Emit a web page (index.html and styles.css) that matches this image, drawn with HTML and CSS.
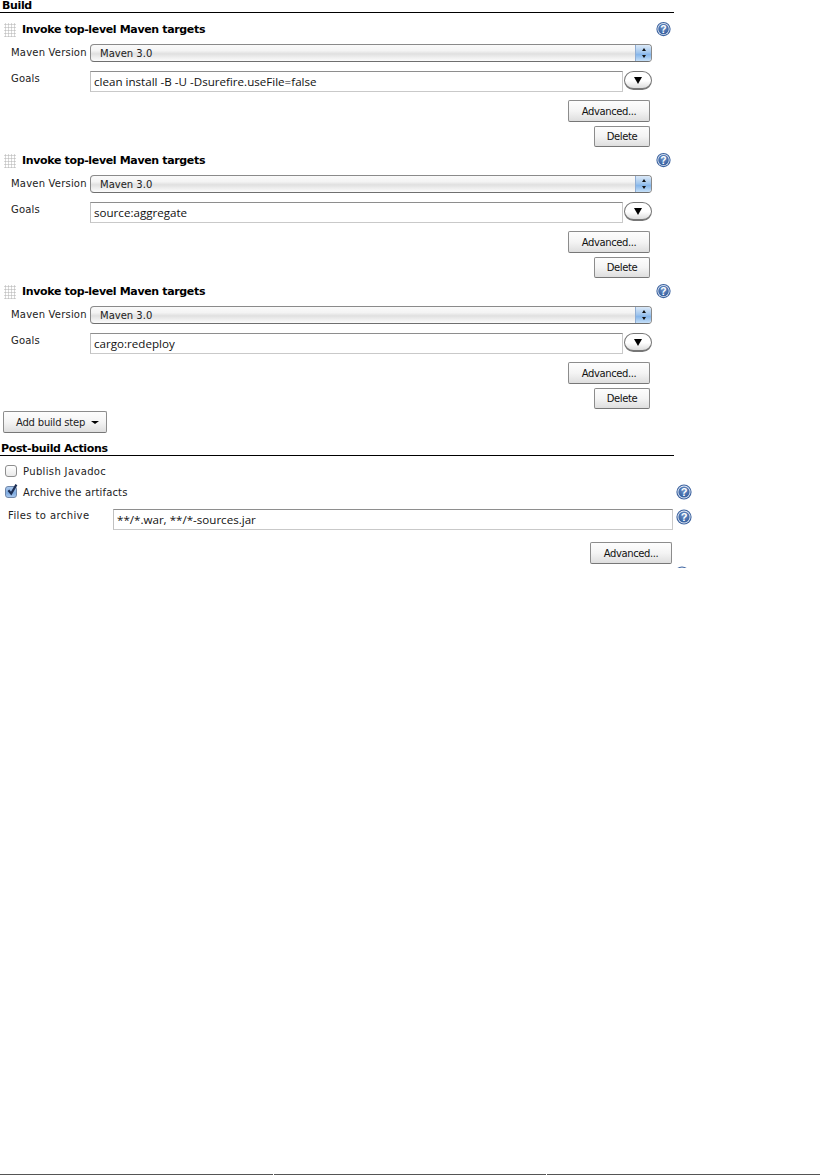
FILE: index.html
```html
<!DOCTYPE html>
<html lang="en">
<head>
<meta charset="utf-8">
<title>Build</title>
<link rel="stylesheet" href="styles.css">
</head>
<body>
<svg class="defs" width="0" height="0" aria-hidden="true">
  <defs>
    <radialGradient id="helpfill" cx="50%" cy="35%" r="70%">
      <stop offset="0" stop-color="#6f93c8"/>
      <stop offset="1" stop-color="#2f5a9c"/>
    </radialGradient>
    <symbol id="help" viewBox="0 0 16 16">
      <circle cx="8" cy="8" r="7.6" fill="#3b629f"/>
      <circle cx="8" cy="8" r="6.5" fill="#e8eef7"/>
      <circle cx="8" cy="8" r="5.6" fill="url(#helpfill)"/>
      <text x="8" y="12" text-anchor="middle" class="help-mark">?</text>
    </symbol>
  </defs>
</svg>
<main class="form">
  <h2 class="section section-build">Build</h2>

  <section class="step">
    <div class="step-head">
      <span class="grip"></span>
      <span class="step-title">Invoke top-level Maven targets</span>
      <svg class="help"><use href="#help"/></svg>
    </div>
    <div class="row row-select">
      <span class="label">Maven Version</span>
      <div class="select"><span class="select-text">Maven 3.0</span><span class="stepper"><i class="up"></i><i class="down"></i></span></div>
    </div>
    <div class="row row-goals">
      <span class="label label-goals">Goals</span>
      <div class="input">clean install -B -U -Dsurefire.useFile=false</div>
      <button class="round" type="button"><i class="tri"></i></button>
    </div>
    <div class="actions">
      <button class="btn adv" type="button">Advanced...</button>
      <button class="btn del" type="button">Delete</button>
    </div>
  </section>

  <section class="step">
    <div class="step-head">
      <span class="grip"></span>
      <span class="step-title">Invoke top-level Maven targets</span>
      <svg class="help"><use href="#help"/></svg>
    </div>
    <div class="row row-select">
      <span class="label">Maven Version</span>
      <div class="select"><span class="select-text">Maven 3.0</span><span class="stepper"><i class="up"></i><i class="down"></i></span></div>
    </div>
    <div class="row row-goals">
      <span class="label label-goals">Goals</span>
      <div class="input">source:aggregate</div>
      <button class="round" type="button"><i class="tri"></i></button>
    </div>
    <div class="actions">
      <button class="btn adv" type="button">Advanced...</button>
      <button class="btn del" type="button">Delete</button>
    </div>
  </section>

  <section class="step">
    <div class="step-head">
      <span class="grip"></span>
      <span class="step-title">Invoke top-level Maven targets</span>
      <svg class="help"><use href="#help"/></svg>
    </div>
    <div class="row row-select">
      <span class="label">Maven Version</span>
      <div class="select"><span class="select-text">Maven 3.0</span><span class="stepper"><i class="up"></i><i class="down"></i></span></div>
    </div>
    <div class="row row-goals">
      <span class="label label-goals">Goals</span>
      <div class="input">cargo:redeploy</div>
      <button class="round" type="button"><i class="tri"></i></button>
    </div>
    <div class="actions">
      <button class="btn adv" type="button">Advanced...</button>
      <button class="btn del" type="button">Delete</button>
    </div>
  </section>

  <button class="btn add" type="button">Add build step<i class="caret"></i></button>

  <h2 class="section section-post">Post-build Actions</h2>

  <div class="check-row check-first">
    <span class="check"></span>
    <span class="check-label label-publish">Publish Javadoc</span>
  </div>
  <div class="check-row check-second">
    <span class="check checked">
      <svg viewBox="0 0 14 15" width="14" height="15"><path d="M3.4 7.2 L6.2 10.6 L11.4 1.6" fill="none" stroke="#1d2f55" stroke-width="2.2"/></svg>
    </span>
    <span class="check-label">Archive the artifacts</span>
    <svg class="help help-post"><use href="#help"/></svg>
  </div>
  <div class="row row-files">
    <span class="label label-files">Files to archive</span>
    <div class="input input-files">**/*.war, **/*-sources.jar</div>
    <svg class="help help-files"><use href="#help"/></svg>
  </div>
  <div class="post-actions">
    <button class="btn adv" type="button">Advanced...</button>
  </div>
  <div class="cut-row"><svg class="help help-post"><use href="#help"/></svg></div>
</main>
<footer class="rule">
  <span></span><span></span><span></span>
</footer>
</body>
</html>
```
FILE: styles.css
```css
* { box-sizing: border-box; }
html, body { margin: 0; padding: 0; background: #fff; }
body {
  width: 820px;
  height: 1175px;
  overflow: hidden;
  display: flex;
  flex-direction: column;
  justify-content: space-between;
  font-family: "Open Sans", "DejaVu Sans", sans-serif;
  font-size: 11px;
  color: #111;
}
.defs { position: absolute; }
.help-mark { font: bold 11px "Liberation Sans", sans-serif; fill: #fff; }

.form { height: 568px; overflow: hidden; flex: none; }

.section {
  margin: 0;
  width: 674px;
  height: 13px;
  font: bold 11px/10px "DejaVu Sans", sans-serif;
  letter-spacing: -0.35px;
  border-bottom: 1px solid #000;
  color: #000;
  padding-left: 2px;
}
.section-build { line-height: 12px; }

.step { height: 131px; width: 674px; padding-top: 8px; }
.step-head { display: flex; align-items: center; height: 17px; padding-left: 4px; width: 671px; }
.grip {
  width: 12px;
  height: 14px;
  background-image: radial-gradient(circle, #c4c4c4 0.9px, transparent 1.2px);
  background-size: 3px 3px;
}
.step-title {
  margin-left: 6px;
  font: bold 11px "DejaVu Sans", sans-serif;
  letter-spacing: -0.35px;
  color: #000;
}
.help { width: 16px; height: 16px; flex: none; }
.step-head .help { margin-left: auto; align-self: flex-start; width: 15px; }

.row { display: flex; }
.row-select { margin-top: 6px; height: 17px; align-items: center; }
.label {
  width: 90px;
  padding-left: 11px;
  flex: none;
  font: 10px "DejaVu Sans", sans-serif;
  letter-spacing: 0.2px;
  color: #222;
  white-space: nowrap;
}
.select {
  width: 562px;
  height: 18px;
  display: flex;
  justify-content: space-between;
  align-items: center;
  border: 1px solid #8a8a8a;
  border-bottom-color: #6f6f6f;
  border-radius: 4px;
  background: linear-gradient(#fafafa 0%, #f4f4f4 35%, #e0e0e0 55%, #f0f0f0 80%, #fcfcfc 100%);
  overflow: hidden;
}
.select-text {
  padding: 1px 0 0 9px;
  font: 10px "DejaVu Sans", sans-serif;
  color: #222;
}
.stepper {
  width: 16px;
  height: 100%;
  display: flex;
  flex-direction: column;
  align-items: center;
  justify-content: center;
  gap: 4px;
  border-left: 1px solid #8fadd3;
  background: linear-gradient(#dbe9f8 0%, #a4c8ee 45%, #86b6ea 60%, #c6e0f8 100%);
}
.up, .down { width: 0; height: 0; border-left: 2.5px solid transparent; border-right: 2.5px solid transparent; }
.up { border-bottom: 3px solid #111; }
.down { border-top: 3px solid #111; }

.row-goals { margin-top: 10px; height: 21px; }
.label-goals { padding-top: 2px; }
.input {
  width: 533px;
  height: 21px;
  padding: 3px 0 0 3px;
  border: 1px solid #c9c9c9;
  border-top-color: #8e8e8e;
  border-left-color: #c0c0c0;
  font: 11.6px/14px "Open Sans", sans-serif;
  color: #111;
  background: #fff;
  white-space: nowrap;
}
.round {
  width: 28px;
  height: 19px;
  margin-left: 1px;
  padding: 0;
  display: flex;
  align-items: center;
  justify-content: center;
  border: 1px solid #777;
  border-bottom-width: 2px;
  border-radius: 10px;
  background: linear-gradient(#fff, #fff 55%, #dcdcdc);
}
.tri {
  width: 0;
  height: 0;
  border-left: 4px solid transparent;
  border-right: 4px solid transparent;
  border-top: 7px solid #000;
}

.actions {
  width: 650px;
  margin-top: 8px;
  display: flex;
  flex-direction: column;
  align-items: flex-end;
  gap: 4px;
}
.btn {
  padding: 0;
  height: 22px;
  border: 1px solid #8c8c8c;
  border-bottom-color: #777;
  border-radius: 2px;
  background: linear-gradient(#fdfdfd, #f4f4f4 50%, #dedede);
  font: 10px "DejaVu Sans", sans-serif;
  letter-spacing: -0.4px;
  color: #111;
}
.adv { width: 82px; }
.del { width: 56px; height: 21px; }
.add {
  display: flex;
  align-items: center;
  width: 104px;
  margin: 5px 0 0 3px;
  padding-left: 12px;
  letter-spacing: -0.2px;
  color: #222;
}
.caret {
  margin-left: 6px;
  width: 0;
  height: 0;
  border-left: 4px solid transparent;
  border-right: 4px solid transparent;
  border-top: 3px solid #000;
}

.section-post { margin-top: 11px; padding-left: 1px; height: 12px; line-height: 9px; }

.check-row { display: flex; align-items: center; width: 692px; height: 16px; padding-left: 5px; }
.check-first { margin-top: 7px; }
.check-second { margin-top: 5px; }
.check {
  width: 12px;
  height: 12px;
  flex: none;
  position: relative;
  border: 1px solid #8e8e8e;
  border-radius: 3px;
  background: linear-gradient(#fff, #e9e9e9);
}
.checked { background: linear-gradient(#a9c7ec, #7fabe0 60%, #a8c8ee); border-color: #6f86a8; }
.checked svg { position: absolute; left: -1px; top: -4px; }
.check-label {
  margin-left: 6px;
  font: 10px "DejaVu Sans", sans-serif;
  letter-spacing: 0.15px;
  color: #222;
}
.label-publish { letter-spacing: 0.35px; }
.check-row .help-post { margin-left: auto; }

.row-files { margin-top: 9px; width: 692px; height: 21px; }
.label-files { width: 113px; padding-left: 8px; padding-top: 1px; letter-spacing: 0.4px; }
.input-files { width: 561px; }
.help-files { margin-left: 3px; }

.post-actions { width: 672px; margin-top: 12px; display: flex; justify-content: flex-end; }
.cut-row { width: 692px; display: flex; justify-content: flex-end; margin-top: 2px; padding-right: 2px; }

.rule { display: flex; gap: 1px; height: 1px; flex: none; }
.rule span { width: 272px; background: #555; }
.rule span:first-child { width: 273px; }
.rule span:last-child { width: 273px; }
```
